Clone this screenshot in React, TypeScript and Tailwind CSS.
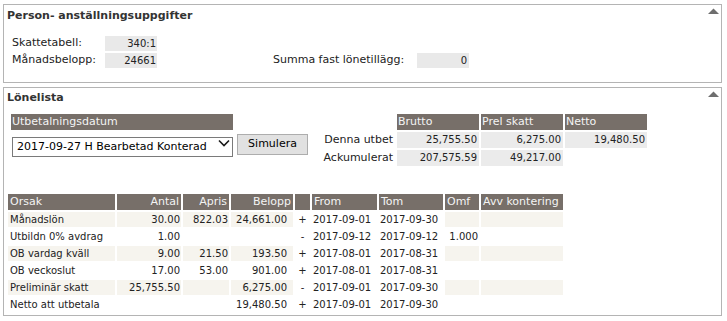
import { ChangeEvent, useState } from 'react';

const Collapse = () => (
  <svg className="absolute top-[3px] right-[2px]" width="11" height="6" viewBox="0 0 11 6">
    <polygon points="0,6 5.5,0.5 11,6" fill="#6e6e6e" />
  </svg>
);

const rows = [
  { orsak: 'Månadslön', antal: '30.00', apris: '822.03', belopp: '24,661.00', sign: '+', from: '2017-09-01', tom: '2017-09-30', omf: '' },
  { orsak: 'Utbildn 0% avdrag', antal: '1.00', apris: '', belopp: '', sign: '-', from: '2017-09-12', tom: '2017-09-12', omf: '1.000' },
  { orsak: 'OB vardag kväll', antal: '9.00', apris: '21.50', belopp: '193.50', sign: '+', from: '2017-08-01', tom: '2017-08-31', omf: '' },
  { orsak: 'OB veckoslut', antal: '17.00', apris: '53.00', belopp: '901.00', sign: '+', from: '2017-08-01', tom: '2017-08-31', omf: '' },
  { orsak: 'Preliminär skatt', antal: '25,755.50', apris: '', belopp: '6,275.00', sign: '-', from: '2017-09-01', tom: '2017-09-30', omf: '' },
  { orsak: 'Netto att utbetala', antal: '', apris: '', belopp: '19,480.50', sign: '+', from: '2017-09-01', tom: '2017-09-30', omf: '' },
];

const App = () => {
  const [datum, setDatum] = useState('2017-09-27');

  const handleChange = (e: ChangeEvent<HTMLSelectElement>) => setDatum(e.target.value);

  return (
    <div className="min-h-screen bg-white pt-[4px] pl-[3px] font-['DejaVu_Sans',Verdana,sans-serif] text-[#222]">
      {/* Person- anställningsuppgifter */}
      <section className="relative w-[719px] h-[79px] border border-[#b4b4b4]">
        <Collapse />
        <h2 className="pt-[4px] pl-[3px] text-[11px] leading-[13px] font-bold text-[#333]">
          Person- anställningsuppgifter
        </h2>
        <div className="mt-[14px] pl-[8px] flex flex-col gap-[2px] text-[11px]">
          <div className="flex h-[15px] items-center">
            <span className="w-[93px]">Skattetabell:</span>
            <span className="w-[52px] h-[15px] bg-[#e9e9e9] text-right pr-[1px] text-[10px] leading-[15px]">340:1</span>
          </div>
          <div className="flex h-[15px] items-center">
            <span className="w-[93px]">Månadsbelopp:</span>
            <span className="w-[52px] h-[15px] bg-[#e9e9e9] text-right pr-[1px] text-[10px] leading-[15px]">24661</span>
            <span className="ml-[116px] w-[144px]">Summa fast lönetillägg:</span>
            <span className="w-[52px] h-[15px] bg-[#e9e9e9] text-right pr-[2px] text-[10px] leading-[15px]">0</span>
          </div>
        </div>
      </section>

      {/* Lönelista */}
      <section className="relative mt-[4px] w-[719px] h-[229px] border border-[#b4b4b4]">
        <Collapse />
        <h2 className="pt-[3px] pl-[3px] text-[11px] leading-[13px] font-bold text-[#333]">Lönelista</h2>

        <div className="mt-[10px] pl-[7px] flex items-start">
          <div className="w-[297px]">
            <div className="w-[222px] h-[16px] bg-[#776f69] text-[#f4f4f4] text-[11px] leading-[16px] pl-[1px]">
              Utbetalningsdatum
            </div>
            <div className="mt-[3px] flex items-start">
              <div className="relative ml-[1px] w-[221px] h-[20px]">
                <select
                  value={datum}
                  onChange={handleChange}
                  className="appearance-none w-full h-full border border-[#7a7a7a] bg-white pl-[4px] text-[11px] text-black outline-none"
                >
                  <option value="2017-09-27">2017-09-27 H Bearbetad Konterad</option>
                </select>
                <svg className="pointer-events-none absolute top-[6px] right-[3px]" width="12" height="8" viewBox="0 0 12 8">
                  <polyline points="1,1.5 6,6.5 11,1.5" fill="none" stroke="#1a1a1a" strokeWidth="1.6" />
                </svg>
              </div>
              <button
                type="button"
                className="ml-[4px] mt-[1px] w-[71px] h-[21px] border border-[#adadad] bg-[#e1e1e1] text-[11px] text-black"
              >
                Simulera
              </button>
            </div>
          </div>

          <div className="ml-[8px] grid grid-cols-[79px_82px_82px_82px] gap-[2px] text-[11px]">
            <div />
            <div className="h-[16px] bg-[#776f69] text-[#f4f4f4] leading-[16px] pl-[1px]">Brutto</div>
            <div className="h-[16px] bg-[#776f69] text-[#f4f4f4] leading-[16px] pl-[1px]">Prel skatt</div>
            <div className="h-[16px] bg-[#776f69] text-[#f4f4f4] leading-[16px] pl-[1px]">Netto</div>

            <div className="h-[16px] leading-[16px] text-right pr-[2px]">Denna utbet</div>
            <div className="h-[16px] bg-[#ebebeb] text-right pr-[2px] text-[10px] leading-[16px]">25,755.50</div>
            <div className="h-[16px] bg-[#ebebeb] text-right pr-[2px] text-[10px] leading-[16px]">6,275.00</div>
            <div className="h-[16px] bg-[#ebebeb] text-right pr-[2px] text-[10px] leading-[16px]">19,480.50</div>

            <div className="h-[16px] leading-[16px] text-right pr-[2px]">Ackumulerat</div>
            <div className="h-[16px] bg-[#ebebeb] text-right pr-[2px] text-[10px] leading-[16px]">207,575.59</div>
            <div className="h-[16px] bg-[#ebebeb] text-right pr-[2px] text-[10px] leading-[16px]">49,217.00</div>
            <div />
          </div>
        </div>

        <table className="mt-[26px] ml-[2px] w-[559px] table-fixed border-separate border-spacing-[2px]">
          <colgroup>
            <col className="w-[107px]" />
            <col className="w-[64px]" />
            <col className="w-[46px]" />
            <col className="w-[62px]" />
            <col className="w-[15px]" />
            <col className="w-[65px]" />
            <col className="w-[64px]" />
            <col className="w-[34px]" />
            <col className="w-[82px]" />
          </colgroup>
          <thead>
            <tr className="h-[16px] bg-[#776f69] text-[#f4f4f4] text-[11px] leading-[16px]">
              <th className="p-0 pl-[2px] text-left font-normal">Orsak</th>
              <th className="p-0 pr-[2px] text-right font-normal">Antal</th>
              <th className="p-0 pr-[2px] text-right font-normal">Apris</th>
              <th className="p-0 pr-[2px] text-right font-normal">Belopp</th>
              <th className="p-0 font-normal"></th>
              <th className="p-0 pl-[2px] text-left font-normal">From</th>
              <th className="p-0 pl-[2px] text-left font-normal">Tom</th>
              <th className="p-0 pl-[2px] text-left font-normal">Omf</th>
              <th className="p-0 pl-[2px] text-left font-normal whitespace-nowrap">Avv kontering</th>
            </tr>
          </thead>
          <tbody className="text-[10px] leading-[15px]">
            {rows.map((r, i) => {
              const bg = i % 2 === 0 ? 'bg-[#f6f4ee]' : '';
              return (
                <tr key={r.orsak} className="h-[15px]">
                  <td className={`p-0 pl-[2px] whitespace-nowrap ${bg}`}>{r.orsak}</td>
                  <td className={`p-0 pr-[1px] text-right ${bg}`}>{r.antal}</td>
                  <td className={`p-0 pr-[1px] text-right ${bg}`}>{r.apris}</td>
                  <td className={`p-0 pr-[6px] text-right ${bg}`}>{r.belopp}</td>
                  <td className="p-0 text-center">{r.sign}</td>
                  <td className="p-0 pl-[1px] whitespace-nowrap">{r.from}</td>
                  <td className="p-0 pl-[1px] whitespace-nowrap">{r.tom}</td>
                  <td className={`p-0 pr-[1px] text-right ${bg}`}>{r.omf}</td>
                  <td className={`p-0 ${bg}`}></td>
                </tr>
              );
            })}
          </tbody>
        </table>
      </section>
    </div>
  );
};

export default App;
